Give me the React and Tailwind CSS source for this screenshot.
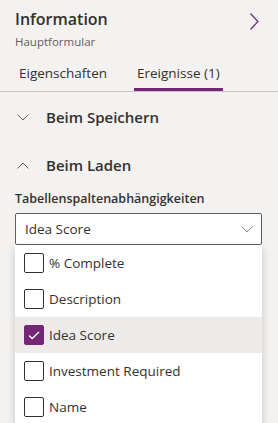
import React, { useState } from 'react';

const columns = ['% Complete', 'Description', 'Idea Score', 'Investment Required', 'Name'];

const ChevronDown = ({ className }) => (
  <svg className={className} width="12" height="7" viewBox="0 0 12 7" fill="none">
    <path d="M0.5 0.5 L6 6 L11.5 0.5" stroke="currentColor" strokeWidth="1" />
  </svg>
);

const ChevronUp = ({ className }) => (
  <svg className={className} width="12" height="7" viewBox="0 0 12 7" fill="none">
    <path d="M0.5 6.5 L6 1 L11.5 6.5" stroke="currentColor" strokeWidth="1" />
  </svg>
);

const App = () => {
  const [selected, setSelected] = useState(['Idea Score']);

  const toggle = (name) => {
    setSelected(selected.includes(name) ? selected.filter((s) => s !== name) : [...selected, name]);
  };

  return (
    <div className="w-[278px] h-[423px] overflow-hidden bg-[#f3f2f1] text-[#323130] font-['Open_Sans',sans-serif]">
      <div className="flex justify-between pl-[15px] pr-[19px] pt-[7px]">
        <div>
          <div className="text-[16px] leading-[24px] font-semibold">Information</div>
          <div className="text-[11.5px] leading-[16px] text-[#605e5c] mt-[3px]">Hauptformular</div>
        </div>
        <svg className="mt-[6px]" width="9" height="17" viewBox="0 0 9 17" fill="none">
          <path d="M0.5 0.5 L8 8.5 L0.5 16.5" stroke="#742774" strokeWidth="1.2" />
        </svg>
      </div>

      <div className="flex mt-[13px] border-b border-[#c8c6c4] pl-[11px]">
        <div className="px-[8px] h-[28px] text-[13.5px] leading-[20px]">Eigenschaften</div>
        <div className="ml-[19px] px-[3px] h-[28px] text-[13.5px] leading-[20px] border-b-[3px] border-[#742774]">Ereignisse (1)</div>
      </div>

      <div className="flex items-center h-[48px] mt-[1px] pl-[17px]">
        <ChevronDown className="text-[#605e5c]" />
        <span className="ml-[17px] text-[15px] font-semibold">Beim Speichern</span>
      </div>
      <div className="flex items-center h-[48px] pl-[17px]">
        <ChevronUp className="text-[#605e5c]" />
        <span className="ml-[17px] text-[15px] font-semibold">Beim Laden</span>
      </div>

      <div className="px-[15px]">
        <div className="text-[12.5px] leading-[20px] font-semibold">Tabellenspaltenabhängigkeiten</div>
        <div className="mt-[4px] w-[247px] h-[32px] bg-white border border-[#605e5c] rounded-[2px] flex items-center justify-between pl-[9px] pr-[8px]">
          <span className="text-[13.5px]">Idea Score</span>
          <ChevronDown className="text-[#8a8886]" />
        </div>
        <div className="w-[247px] bg-white shadow-[0_3px_8px_rgba(0,0,0,0.18)]">
          {columns.map((name) => {
            const checked = selected.includes(name);
            return (
              <div
                key={name}
                onClick={() => toggle(name)}
                className={`flex items-center h-[36px] pl-[9px] cursor-pointer ${checked ? 'bg-[#edebe9]' : ''}`}
              >
                <div
                  className={`w-[20px] h-[20px] rounded-[2px] flex items-center justify-center ${checked ? 'bg-[#742774] border border-[#742774]' : 'border border-[#323130]'}`}
                >
                  {checked && (
                    <svg width="12" height="9" viewBox="0 0 12 9" fill="none">
                      <path d="M1 4.5 L4.2 7.5 L11 1" stroke="white" strokeWidth="1.3" />
                    </svg>
                  )}
                </div>
                <span className="ml-[5px] text-[13.5px]">{name}</span>
              </div>
            );
          })}
        </div>
      </div>
    </div>
  );
};

export default App;
